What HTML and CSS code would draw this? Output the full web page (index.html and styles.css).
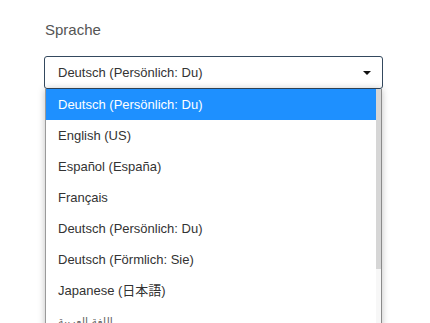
FILE: index.html
```html
<!DOCTYPE html>
<html>
<head>
  <meta charset="utf-8" />
  <title>Sprache</title>
  <link rel="stylesheet" href="styles.css">
</head>
<body>

<div class="field">
  <div class="label">Sprache</div>

  <div class="select">
    <span class="value">Deutsch (Persönlich: Du)</span>
    <span class="caret"></span>
  </div>

  <div class="menu">
    <ul class="options">
      <li class="active">Deutsch (Persönlich: Du)</li>
      <li>English (US)</li>
      <li>Español (España)</li>
      <li>Français</li>
      <li>Deutsch (Persönlich: Du)</li>
      <li>Deutsch (Förmlich: Sie)</li>
      <li>Japanese (日本語)</li>
      <li class="rtl">اللغة العربية</li>
    </ul>
    <div class="scrollbar"><div class="thumb"></div></div>
  </div>
</div>

</body>
</html>
```

FILE: styles.css
```css
html {
  overflow: hidden;
}
body {
  margin: 0;
  background: #fff;
  font: 13px 'Liberation Sans', Arial, 'Noto Sans CJK JP', sans-serif;
  color: #333;
}
.field {
  padding: 21px 0 0 44px;
}
.label {
  font-size: 15px;
  line-height: 18px;
  color: #555;
  margin-left: 1px;
  margin-bottom: 17px;
}
.select {
  width: 339px;
  height: 33px;
  box-sizing: border-box;
  border: 1px solid #34495e;
  border-radius: 3px;
  display: flex;
  align-items: center;
  padding: 0 11px 0 13px;
}
.value {
  flex: 1;
}
.caret {
  width: 0;
  height: 0;
  border-left: 4px solid transparent;
  border-right: 4px solid transparent;
  border-top: 4px solid #111;
}
.menu {
  position: relative;
  width: 337px;
  height: 240px;
  margin-left: 1px;
  box-sizing: border-box;
  border-left: 1px solid #9a9a9a;
  border-right: 1px solid #8a8a8a;
  background: #fff;
  box-shadow: 0 0 7px rgba(0, 0, 0, 0.25);
  display: flex;
}
.options {
  flex: 1;
  margin: 0;
  padding: 0;
  list-style: none;
}
.options li {
  height: 31px;
  line-height: 32px;
  padding-left: 12px;
  white-space: nowrap;
}
.options li.active {
  background: #1e90ff;
  color: #fff;
}
.options li.rtl {
  font-family: 'DejaVu Sans', sans-serif;
  font-size: 11px;
  color: #666;
}
.scrollbar {
  width: 5px;
  background: #f7f7f7;
}
.thumb {
  height: 180px;
  background: #d6d6d6;
}
```
